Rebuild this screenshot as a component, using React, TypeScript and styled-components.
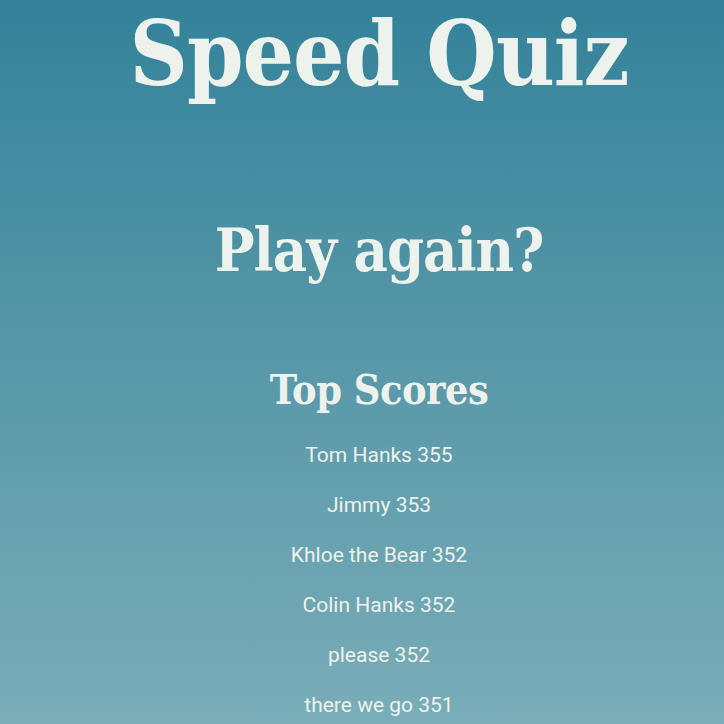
import React from "react";
import styled, { createGlobalStyle } from "styled-components";

const Global = createGlobalStyle`
  html, body { margin: 0; padding: 0; }
  body {
    min-height: 724px;
    background: linear-gradient(180deg, #33829a 0px, #5898a8 362px, #7aadb8 724px);
    background-attachment: fixed;
    color: #eef2ec;
  }
`;

const Page = styled.main`
  display: flex;
  flex-direction: column;
  align-items: center;
  padding-left: 34px;
  min-height: 724px;
  box-sizing: border-box;
`;

const Title = styled.h1`
  font-family: "DejaVu Serif Condensed", "DejaVu Serif", serif;
  font-weight: 700;
  font-size: 90px;
  line-height: normal;
  margin: 0;
  padding: 0;
  letter-spacing: -1px;
`;

const PlayAgain = styled.h2`
  font-family: "DejaVu Serif Condensed", "DejaVu Serif", serif;
  font-weight: 700;
  font-size: 59px;
  line-height: 1;
  margin: 115px 0 0;
  letter-spacing: -1px;
  cursor: pointer;
`;

const ScoresTitle = styled.h3`
  font-family: "DejaVu Serif Condensed", "DejaVu Serif", serif;
  font-weight: 700;
  font-size: 41px;
  line-height: 1;
  margin: 90px 0 0;
  letter-spacing: -0.5px;
`;

const ScoreList = styled.ul`
  list-style: none;
  margin: 19px 0 0;
  padding: 0;
  display: flex;
  flex-direction: column;
  align-items: center;
`;

const ScoreItem = styled.li`
  font-family: "Roboto", "Open Sans", sans-serif;
  font-size: 21px;
  line-height: 50px;
  height: 50px;
`;

const scores = [
  { name: "Tom Hanks", score: 355 },
  { name: "Jimmy", score: 353 },
  { name: "Khloe the Bear", score: 352 },
  { name: "Colin Hanks", score: 352 },
  { name: "please", score: 352 },
  { name: "there we go", score: 351 },
];

export default function App() {
  return (
    <>
      <Global />
      <Page>
        <Title>Speed Quiz</Title>
        <PlayAgain>Play again?</PlayAgain>
        <ScoresTitle>Top Scores</ScoresTitle>
        <ScoreList>
          {scores.map((s, i) => (
            <ScoreItem key={i}>
              {s.name} {s.score}
            </ScoreItem>
          ))}
        </ScoreList>
      </Page>
    </>
  );
}
